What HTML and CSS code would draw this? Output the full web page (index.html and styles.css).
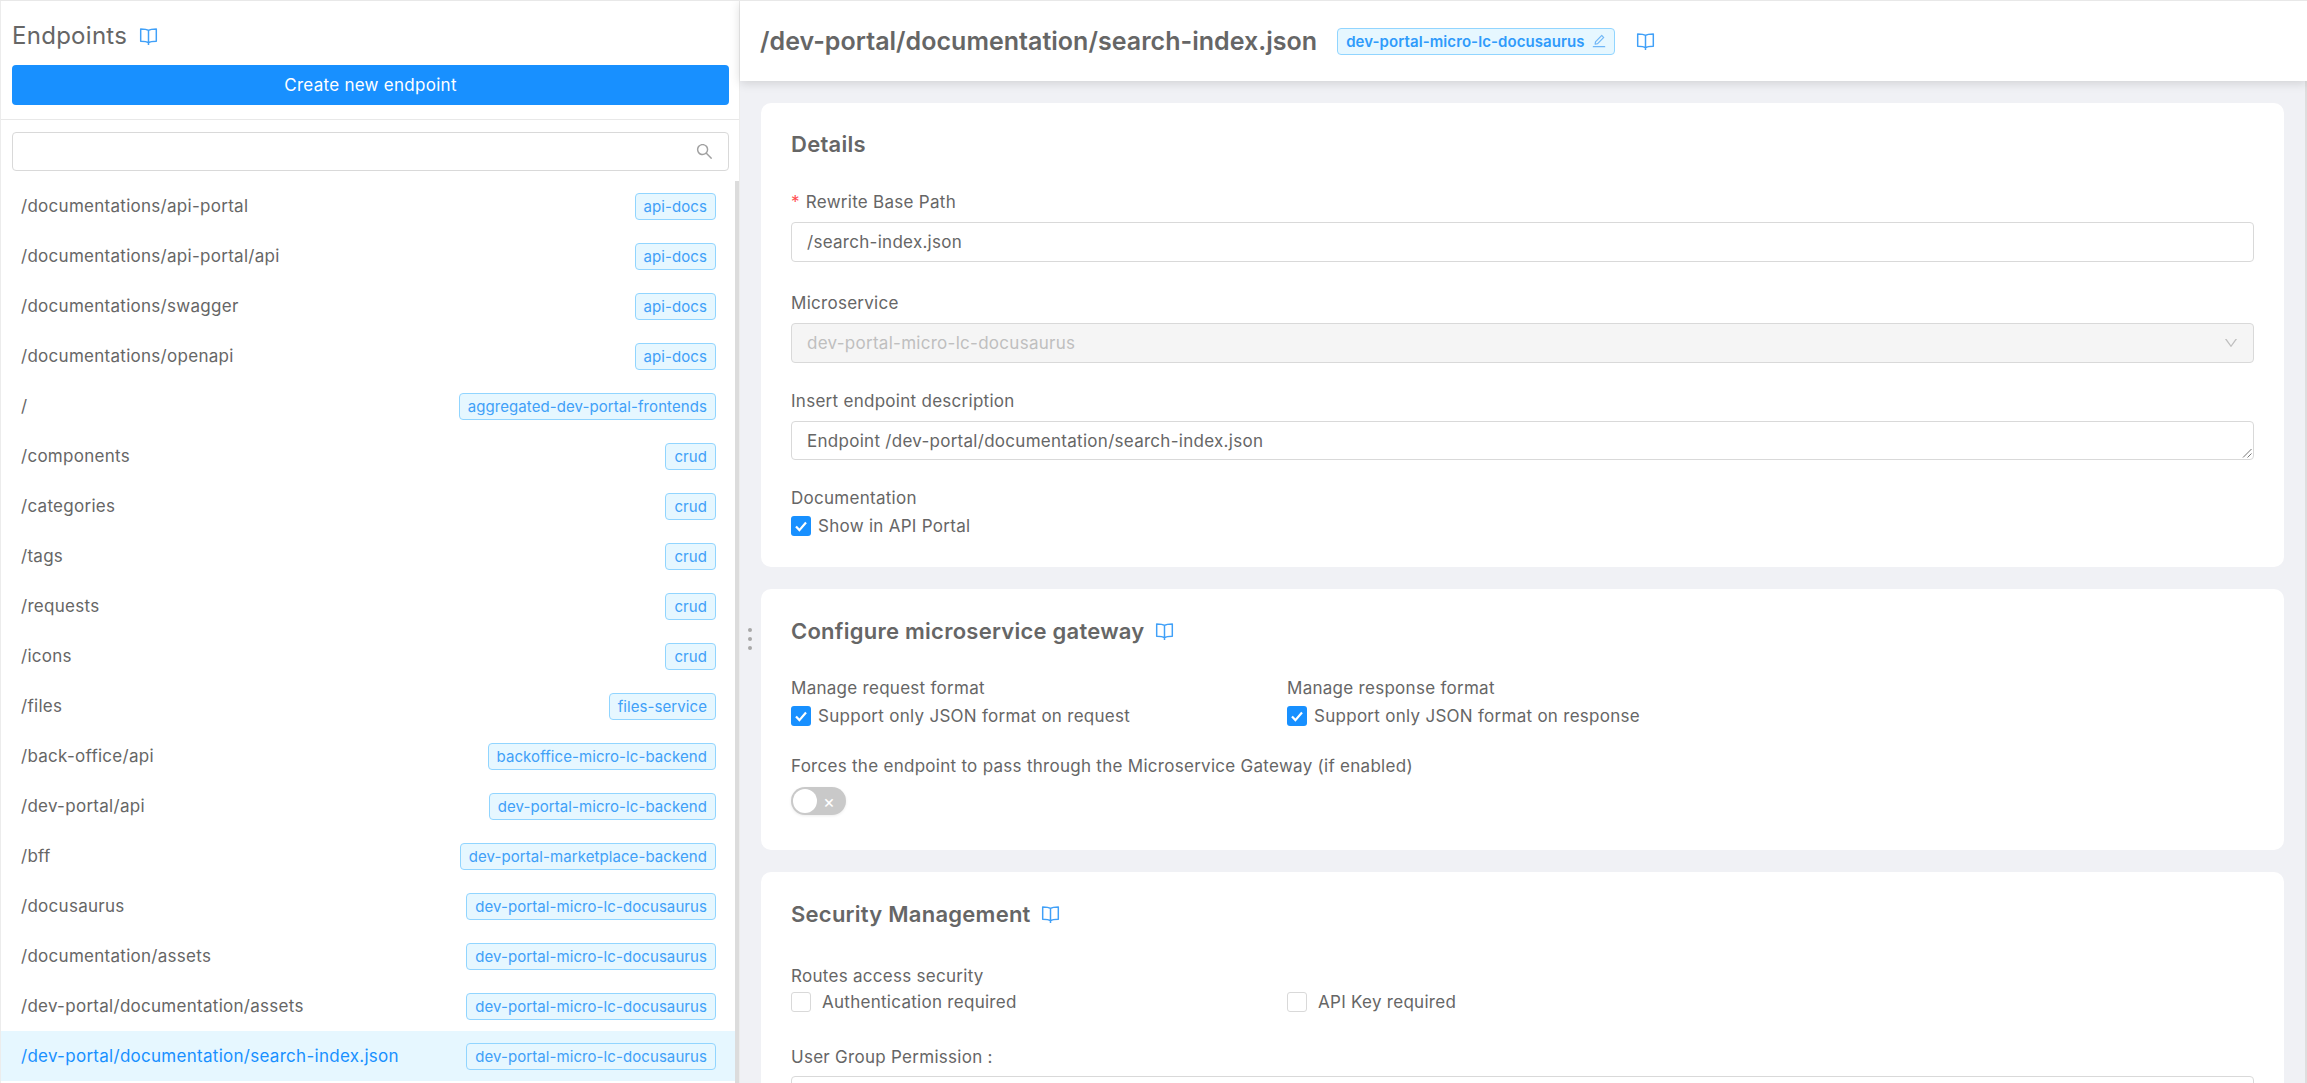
FILE: index.html
```html
<!DOCTYPE html>
<html lang="en">
<head>
  <meta charset="UTF-8">
  <meta name="viewport" content="width=device-width, initial-scale=1.0">
  <title>Endpoints</title>
  <link rel="stylesheet" href="styles.css">
</head>
<body>
  <svg class="icon-defs" width="0" height="0" aria-hidden="true">
    <symbol id="icon-book" viewBox="0 0 18 18">
      <path d="M9 3.2C7.6 2.2 5.6 1.8 1.6 1.8v11.8c4 0 6 .4 7.4 1.4 1.4-1 3.4-1.4 7.4-1.4V1.8c-4 0-6 .4-7.4 1.4zM9 3.2V17" fill="none" stroke="currentColor" stroke-width="1.4" stroke-linejoin="round"/>
    </symbol>
  </svg>

  <div id="wrapper">
    <aside id="sidebar">
      <div id="sidebar-head">
        <div class="sidebar-title">
          <h2>Endpoints</h2>
          <svg class="book"><use href="#icon-book"/></svg>
        </div>
        <button class="btn-primary">Create new endpoint</button>
      </div>

      <div id="search-box">
        <div class="search-input">
          <svg viewBox="64 64 896 896" width="17" height="17" fill="currentColor"><path d="M909.6 854.5L649.9 594.8C690.2 542.7 712 479 712 412c0-80.2-31.3-155.4-87.9-212.1-56.6-56.7-132-87.9-212.1-87.9s-155.5 31.3-212.1 87.9C143.2 256.5 112 331.8 112 412c0 80.1 31.3 155.5 87.9 212.1C256.5 680.8 331.8 712 412 712c67 0 130.6-21.8 182.7-62l259.7 259.6a8.2 8.2 0 0 0 11.6 0l43.6-43.5a8.2 8.2 0 0 0 0-11.6zM570.4 570.4C528 612.7 471.8 636 412 636s-116-23.3-158.4-65.6C211.3 528 188 471.8 188 412s23.3-116.1 65.6-158.4C296 211.3 352.2 188 412 188s116.1 23.2 158.4 65.6S636 352.2 636 412s-23.3 116.1-65.6 158.4z"/></svg>
        </div>
      </div>

      <ul id="endpoint-list">
        <li><span>/documentations/api-portal</span><span class="tag">api-docs</span></li>
        <li><span>/documentations/api-portal/api</span><span class="tag">api-docs</span></li>
        <li><span>/documentations/swagger</span><span class="tag">api-docs</span></li>
        <li><span>/documentations/openapi</span><span class="tag">api-docs</span></li>
        <li><span>/</span><span class="tag">aggregated-dev-portal-frontends</span></li>
        <li><span>/components</span><span class="tag">crud</span></li>
        <li><span>/categories</span><span class="tag">crud</span></li>
        <li><span>/tags</span><span class="tag">crud</span></li>
        <li><span>/requests</span><span class="tag">crud</span></li>
        <li><span>/icons</span><span class="tag">crud</span></li>
        <li><span>/files</span><span class="tag">files-service</span></li>
        <li><span>/back-office/api</span><span class="tag">backoffice-micro-lc-backend</span></li>
        <li><span>/dev-portal/api</span><span class="tag">dev-portal-micro-lc-backend</span></li>
        <li><span>/bff</span><span class="tag">dev-portal-marketplace-backend</span></li>
        <li><span>/docusaurus</span><span class="tag">dev-portal-micro-lc-docusaurus</span></li>
        <li><span>/documentation/assets</span><span class="tag">dev-portal-micro-lc-docusaurus</span></li>
        <li><span>/dev-portal/documentation/assets</span><span class="tag">dev-portal-micro-lc-docusaurus</span></li>
        <li class="selected"><span>/dev-portal/documentation/search-index.json</span><span class="tag">dev-portal-micro-lc-docusaurus</span></li>
      </ul>
    </aside>

    <main id="main">
      <header id="main-head">
        <h1>/dev-portal/documentation/search-index.json</h1>
        <span class="tag tag-edit">dev-portal-micro-lc-docusaurus
          <svg viewBox="64 64 896 896" width="14" height="14" fill="currentColor"><path d="M257.7 752c2 0 4-.2 6-.5L431.9 722c2-.4 3.9-1.3 5.3-2.8l423.9-423.9a9.96 9.96 0 0 0 0-14.1L694.9 114.9c-1.9-1.9-4.4-2.9-7.1-2.9s-5.2 1-7.1 2.9L256.8 538.8c-1.5 1.5-2.4 3.3-2.8 5.3l-29.5 168.2a33.5 33.5 0 0 0 9.4 29.8c6.6 6.4 14.9 9.9 23.8 9.9zm67.4-174.4L687.8 215l73.3 73.3-362.7 362.6-88.9 15.7 15.6-89zM880 836H144c-17.7 0-32 14.3-32 32v36c0 4.4 3.6 8 8 8h784c4.4 0 8-3.6 8-8v-36c0-17.7-14.3-32-32-32z"/></svg>
        </span>
        <svg class="book"><use href="#icon-book"/></svg>
      </header>

      <div id="main-body">
        <div class="resize-dots"><i></i><i></i><i></i></div>

        <section class="card card-details">
          <h3 class="card-title">Details</h3>

          <div class="form-item form-item-wide">
            <label class="field-label"><span class="required">*</span>Rewrite Base Path</label>
            <div class="input">/search-index.json</div>
          </div>

          <div class="form-item">
            <label class="field-label">Microservice</label>
            <div class="input input-disabled">dev-portal-micro-lc-docusaurus
              <svg viewBox="64 64 896 896" width="14" height="14" fill="currentColor"><path d="M884 256h-75c-5.1 0-9.9 2.5-12.9 6.6L512 654.2 227.9 262.6c-3-4.1-7.8-6.6-12.9-6.6h-75c-6.5 0-10.3 7.4-6.5 12.7l352.6 486.1c12.8 17.6 39 17.6 51.7 0l352.6-486.1c3.9-5.3.1-12.7-6.4-12.7z"/></svg>
            </div>
          </div>

          <div class="form-item">
            <label class="field-label">Insert endpoint description</label>
            <div class="input input-area">Endpoint /dev-portal/documentation/search-index.json
              <svg class="grip" viewBox="0 0 10 10" width="10" height="10"><path d="M1 9.5L9.5 1M5.5 9.5L9.5 5.5" stroke="#777" stroke-width="1" fill="none"/></svg>
            </div>
          </div>

          <div class="check-group">
            <label class="field-label">Documentation</label>
            <div class="check"><span class="box checked"><svg viewBox="0 0 20 20"><path d="M5 10.5l3.4 3.6L15 6.5"/></svg></span>Show in API Portal</div>
          </div>
        </section>

        <section class="card">
          <h3 class="card-title">Configure microservice gateway <svg class="book"><use href="#icon-book"/></svg></h3>

          <div class="two-cols">
            <div class="check-group">
              <label class="field-label">Manage request format</label>
              <div class="check"><span class="box checked"><svg viewBox="0 0 20 20"><path d="M5 10.5l3.4 3.6L15 6.5"/></svg></span>Support only JSON format on request</div>
            </div>
            <div class="check-group">
              <label class="field-label">Manage response format</label>
              <div class="check"><span class="box checked"><svg viewBox="0 0 20 20"><path d="M5 10.5l3.4 3.6L15 6.5"/></svg></span>Support only JSON format on response</div>
            </div>
          </div>

          <div class="toggle-group">
            <label class="field-label">Forces the endpoint to pass through the Microservice Gateway (if enabled)</label>
            <div class="toggle"><span class="knob"></span><span class="toggle-x">×</span></div>
          </div>
        </section>

        <section class="card card-security">
          <h3 class="card-title">Security Management <svg class="book"><use href="#icon-book"/></svg></h3>

          <div class="two-cols">
            <div class="check-group check-group-tight">
              <label class="field-label">Routes access security</label>
              <div class="check check-off"><span class="box"></span>Authentication required</div>
            </div>
            <div class="check-group check-group-tight">
              <label class="field-label">&nbsp;</label>
              <div class="check check-off"><span class="box"></span>API Key required</div>
            </div>
          </div>

          <div class="form-item user-group">
            <label class="field-label">User Group Permission :</label>
            <div class="input"></div>
          </div>
        </section>
      </div>
    </main>
  </div>
</body>
</html>
```

FILE: styles.css
```css
* {
  margin: 0;
  padding: 0;
  box-sizing: border-box;
}

html, body {
  height: 100%;
  overflow: hidden;
  font-family: Inter, "Liberation Sans", sans-serif;
  font-size: 17px;
  letter-spacing: 0.28px;
  color: #666;
  background-color: white;
}

.icon-defs {
  position: absolute;
}

#wrapper {
  height: 100vh;
  display: flex;
  border-top: 1px solid #e8e8e8;
  overflow: hidden;
}

/* left column */
#sidebar {
  width: 740px;
  flex: none;
  display: flex;
  flex-direction: column;
  border-left: 1px solid #ececec;
  border-right: 1px solid #ececec;
  overflow: hidden;
}

#sidebar-head {
  padding: 0 10px 14px 11px;
  border-bottom: 1px solid #e8e8e8;
}

.sidebar-title {
  height: 64px;
  padding-top: 6px;
  display: flex;
  align-items: center;
  gap: 12px;
}

.sidebar-title h2 {
  font-size: 24px;
  font-weight: 400;
  line-height: 32px;
}

.book {
  width: 19px;
  height: 19px;
  flex: none;
  color: #40a0f8;
}

.btn-primary {
  display: block;
  width: 100%;
  height: 40px;
  border: none;
  border-radius: 4px;
  background-color: #1890ff;
  color: white;
  font-family: inherit;
  font-size: 17px;
  letter-spacing: inherit;
}

#search-box {
  padding: 12px 10px 10px 11px;
}

.search-input {
  height: 39px;
  border: 1px solid #d9d9d9;
  border-radius: 4px;
  display: flex;
  align-items: center;
  justify-content: flex-end;
  padding-right: 15px;
  color: #a0a0a0;
}

#endpoint-list {
  list-style: none;
  flex: 1;
  border-right: 4px solid #dcdcdc;
  overflow: hidden;
}

#endpoint-list li {
  height: 50px;
  padding: 0 19px 0 20px;
  display: flex;
  align-items: center;
  justify-content: space-between;
}

#endpoint-list li.selected {
  background-color: #e6f7ff;
  color: #1890ff;
}

.tag {
  display: inline-flex;
  align-items: center;
  height: 27px;
  padding: 0 8px;
  border: 1px solid #91d5ff;
  border-radius: 4px;
  background-color: #e6f7ff;
  color: #40a0f8;
  font-size: 15px;
  letter-spacing: 0.08px;
  white-space: nowrap;
}

/* right column */
#main {
  flex: 1;
  min-width: 0;
  display: flex;
  flex-direction: column;
}

#main-head {
  height: 80px;
  flex: none;
  padding-left: 20px;
  display: flex;
  align-items: center;
  background-color: white;
  box-shadow: 0 2px 10px rgba(0, 0, 0, 0.14);
  position: relative;
  z-index: 1;
}

#main-head h1 {
  font-size: 25px;
  font-weight: 600;
  line-height: 32px;
  letter-spacing: 0.03px;
  margin-right: 20px;
}

.tag-edit {
  gap: 7px;
  font-weight: 600;
  margin-right: 21px;
  color: #2f9bfb;
}

.tag-edit svg {
  color: #6fb6f7;
}

#main-body {
  flex: 1;
  overflow: hidden;
  padding: 22px 21px 0 21px;
  background-color: #f0f1f5;
  border-right: 2px solid #dedede;
  position: relative;
}

.resize-dots {
  position: absolute;
  left: 8px;
  top: 547px;
  display: flex;
  flex-direction: column;
  gap: 5px;
}

.resize-dots i {
  display: block;
  width: 4px;
  height: 4px;
  border-radius: 50%;
  background-color: #a8a8a8;
}

.card {
  background-color: white;
  border-radius: 10px;
  padding: 28px 30px 30px;
  margin-bottom: 22px;
}

.card-title {
  font-size: 22px;
  font-weight: 600;
  letter-spacing: 0.25px;
  line-height: 28px;
  margin-bottom: 32px;
  display: flex;
  align-items: center;
  gap: 10px;
}

.card-details {
  padding-top: 27px;
}

.card-details .card-title {
  margin-bottom: 33px;
}

.field-label {
  display: block;
  line-height: 22px;
}

.required {
  color: #ff4d4f;
  margin-right: 6px;
}

.form-item {
  margin-bottom: 27px;
}

.form-item-wide {
  margin-bottom: 30px;
}

.form-item .field-label {
  margin-bottom: 9px;
}

.input {
  height: 40px;
  border: 1px solid #d9d9d9;
  border-radius: 4px;
  padding: 0 15px;
  display: flex;
  align-items: center;
  justify-content: space-between;
  background-color: white;
}

.input-disabled {
  background-color: #f5f5f5;
  color: #bfbfbf;
}

.input-area {
  height: 39px;
  position: relative;
}

.grip {
  position: absolute;
  right: 1px;
  bottom: 1px;
}

.check-group .field-label {
  margin-bottom: 6px;
}

.check {
  height: 22px;
  display: flex;
  align-items: center;
  gap: 7px;
}

.check-off {
  gap: 11px;
}

.box {
  width: 20px;
  height: 20px;
  flex: none;
  border: 1px solid #d9d9d9;
  border-radius: 3px;
  background-color: white;
}

.box.checked {
  border: none;
  background-color: #1890ff;
}

.box svg {
  display: block;
  fill: none;
  stroke: white;
  stroke-width: 2.2;
}

.two-cols {
  display: grid;
  grid-template-columns: 496px 1fr;
}

.toggle-group {
  margin-top: 28px;
  margin-bottom: 5px;
}

.toggle-group .field-label {
  margin-bottom: 10px;
}

.toggle {
  width: 55px;
  height: 28px;
  border-radius: 14px;
  background-color: #c9c9c9;
  display: flex;
  align-items: center;
  padding-left: 2px;
  box-shadow: 0 1px 3px rgba(0, 0, 0, 0.08);
}

.knob {
  width: 24px;
  height: 24px;
  border-radius: 50%;
  background-color: white;
}

.toggle-x {
  color: white;
  font-size: 18px;
  margin-left: 6px;
}

.card-security .card-title {
  margin-bottom: 37px;
}

.check-group-tight .field-label {
  margin-bottom: 4px;
}

.user-group {
  margin-top: 33px;
}

.user-group .field-label {
  margin-bottom: 8px;
}
```
